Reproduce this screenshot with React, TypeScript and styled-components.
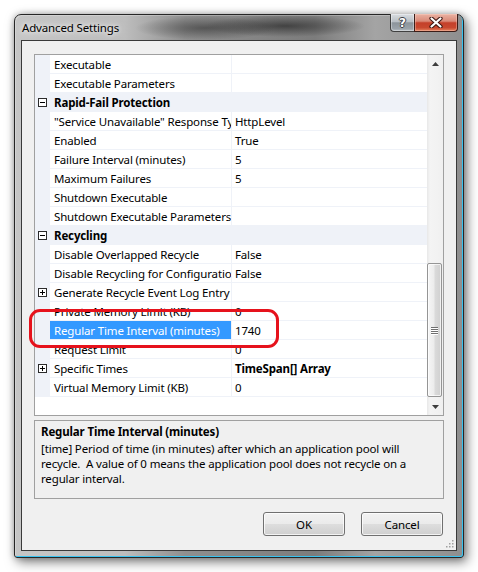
import React from "react";
import styled, { createGlobalStyle } from "styled-components";

const Global = createGlobalStyle`
  html, body { margin: 0; padding: 0; background: #ffffff; }
  body { font-family: "Noto Sans", "Open Sans", sans-serif; font-size: 11.5px; letter-spacing: -0.15px; color: #000; }
  * { box-sizing: border-box; }
`;

const LINE = "#eff2f8";

const Stage = styled.div`
  width: 478px;
  height: 572px;
  padding: 14px 0 0 14px;
  background: #ffffff;
  overflow: hidden;
`;

const Window = styled.div`
  width: 450px;
  height: 544px;
  border: 1px solid #262626;
  border-radius: 7px 7px 3px 3px;
  padding: 0 6px 6px 6px;
  display: flex;
  flex-direction: column;
  background:
    radial-gradient(ellipse 70px 12px at 190px 13px, rgba(40, 40, 40, 0.55), rgba(40, 40, 40, 0)),
    radial-gradient(ellipse 80px 11px at 270px 11px, rgba(25, 25, 25, 0.6), rgba(25, 25, 25, 0)),
    linear-gradient(90deg, #c6c6c6 0px, #bdbdbd 110px, #8f8f8f 170px, #7c7c7c 300px, #a4a4a4 360px, #8e8e8e 450px);
  box-shadow:
    inset -1px -1px 0 #37c3f0,
    inset 1px 1px 0 rgba(255, 255, 255, 0.25),
    3px 4px 12px rgba(0, 0, 0, 0.5),
    0 0 6px rgba(0, 0, 0, 0.25);
`;

const TitleBar = styled.div`
  height: 25px;
  flex: none;
  display: flex;
  justify-content: space-between;
  align-items: flex-start;
`;

const TitleText = styled.div`
  padding: 5px 0 0 1px;
  font-size: 11.5px;
  line-height: 16px;
  color: #000;
  text-shadow: 0 0 8px rgba(255, 255, 255, 0.95), 0 0 4px rgba(255, 255, 255, 0.8);
`;

const CaptionButtons = styled.div`
  display: flex;
  margin: -1px -1px 0 0;
`;

const HelpButton = styled.div`
  width: 24px;
  height: 18px;
  border: 1px solid #404040;
  border-right: none;
  border-top: none;
  border-radius: 0 0 0 4px;
  background: linear-gradient(180deg, #d9dde1 0%, #b9bfc5 45%, #8c949b 52%, #9aa2a9 85%, #b7bec4 100%);
  box-shadow: inset 0 0 0 1px rgba(255, 255, 255, 0.35);
  display: flex;
  align-items: center;
  justify-content: center;
  font-family: "DejaVu Sans", sans-serif;
  font-weight: bold;
  font-size: 12px;
  letter-spacing: 0;
  color: #fff;
  text-shadow: -1px 0 0 #3c4046, 1px 0 0 #3c4046, 0 -1px 0 #3c4046, 0 1px 0 #3c4046;
`;

const CloseButton = styled.div`
  width: 44px;
  height: 18px;
  border: 1px solid #3b1d18;
  border-top: none;
  border-radius: 0 0 4px 0;
  background: linear-gradient(180deg, #eab2a3 0%, #d98a78 42%, #c4402a 52%, #c8482f 80%, #e5835f 100%);
  box-shadow: inset 0 0 0 1px rgba(255, 220, 210, 0.35);
  display: flex;
  align-items: center;
  justify-content: center;
`;

const Client = styled.div`
  position: relative;
  flex: 1;
  border: 1px solid #3a3a3a;
  background: #f0f0f0;
  padding: 13px 12px 14px 12px;
  display: flex;
  flex-direction: column;
`;

const Grid = styled.div`
  position: relative;
  height: 362px;
  flex: none;
  border: 1px solid #a0a0a0;
  display: flex;
  background: #ffffff;
`;

const List = styled.div`
  flex: 1;
  display: flex;
  flex-direction: column;
  background: #ffffff;
  overflow: hidden;
`;

const Row = styled.div`
  display: grid;
  grid-template-columns: 14px 181px 196px;
  column-gap: 1px;
  height: 19px;
  flex: none;
  background: ${LINE};
`;

const Gutter = styled.div`
  height: 19px;
  display: flex;
  align-items: center;
  padding-left: 3px;
`;

const NameCell = styled.div<{ $selected?: boolean }>`
  height: 18px;
  line-height: 20px;
  padding-left: 4px;
  white-space: nowrap;
  overflow: hidden;
  background: ${(p) => (p.$selected ? "#3399ff" : "#ffffff")};
  color: ${(p) => (p.$selected ? "#ffffff" : "#000000")};
`;

const ValueCell = styled.div<{ $bold?: boolean }>`
  height: 18px;
  line-height: 20px;
  padding-left: 3px;
  white-space: nowrap;
  overflow: hidden;
  background: #ffffff;
  font-weight: ${(p) => (p.$bold ? "bold" : "normal")};
`;

const CategoryName = styled.div`
  grid-column: 2 / 4;
  height: 19px;
  line-height: 20px;
  padding-left: 4px;
  font-weight: bold;
  white-space: nowrap;
`;

const Filler = styled.div`
  flex: 1;
  background: #ffffff;
`;

const ScrollBar = styled.div`
  width: 16px;
  flex: none;
  display: flex;
  flex-direction: column;
  background: linear-gradient(90deg, #e8e8e8 0px, #f4f4f4 3px, #f0f0f0 100%);
`;

const ArrowButton = styled.div`
  height: 17px;
  flex: none;
  display: flex;
  align-items: center;
  justify-content: center;
`;

const Track = styled.div`
  flex: 1;
  display: flex;
  flex-direction: column;
`;

const Thumb = styled.div`
  width: 15px;
  border: 1px solid #959595;
  border-radius: 2px;
  background: linear-gradient(90deg, #f6f6f6 0%, #ececec 45%, #dadada 55%, #d0d0d0 100%);
  box-shadow: inset 0 0 0 1px rgba(255, 255, 255, 0.7);
  display: flex;
  align-items: center;
  justify-content: center;
`;

const Gripper = styled.div`
  width: 7px;
  display: flex;
  flex-direction: column;
  gap: 1px;
`;

const GripLine = styled.div`
  height: 1px;
  background: #6f6f6f;
  box-shadow: 0 1px 0 #ffffff;
`;

const Highlight = styled.div`
  position: absolute;
  left: -6px;
  top: 254px;
  width: 250px;
  height: 39px;
  border: 3px solid #e6121c;
  border-radius: 11px;
  pointer-events: none;
`;

const Description = styled.div`
  margin-top: 4px;
  height: 79px;
  flex: none;
  border: 1px solid #a0a0a0;
  background: #f0f0f0;
  padding: 3px 6px;
`;

const DescTitle = styled.div`
  font-weight: bold;
  line-height: 15px;
`;

const DescBody = styled.div`
  margin-top: 2px;
  line-height: 15px;
  white-space: nowrap;
`;

const ButtonRow = styled.div`
  margin-top: 13px;
  display: flex;
  justify-content: flex-end;
  gap: 16px;
  padding-right: 1px;
`;

const DialogButton = styled.div`
  width: 82px;
  height: 24px;
  border: 1px solid #707070;
  border-radius: 3px;
  background: linear-gradient(180deg, #f2f2f2 0%, #ebebeb 48%, #dddddd 52%, #cfcfcf 100%);
  box-shadow: inset 0 0 0 1px rgba(255, 255, 255, 0.75);
  display: flex;
  align-items: center;
  justify-content: center;
  font-size: 11.5px;
  color: #000;
`;

const SizeGrip = styled.svg`
  position: absolute;
  right: 2px;
  bottom: 2px;
`;

type Item =
  | { kind: "cat"; name: string }
  | { kind: "prop"; name: string; value?: string; bold?: boolean; plus?: boolean; selected?: boolean };

const items: Item[] = [
  { kind: "prop", name: "Executable" },
  { kind: "prop", name: "Executable Parameters" },
  { kind: "cat", name: "Rapid-Fail Protection" },
  { kind: "prop", name: "\"Service Unavailable\" Response Type", value: "HttpLevel" },
  { kind: "prop", name: "Enabled", value: "True" },
  { kind: "prop", name: "Failure Interval (minutes)", value: "5" },
  { kind: "prop", name: "Maximum Failures", value: "5" },
  { kind: "prop", name: "Shutdown Executable" },
  { kind: "prop", name: "Shutdown Executable Parameters" },
  { kind: "cat", name: "Recycling" },
  { kind: "prop", name: "Disable Overlapped Recycle", value: "False" },
  { kind: "prop", name: "Disable Recycling for Configuration Changes", value: "False" },
  { kind: "prop", name: "Generate Recycle Event Log Entry", plus: true },
  { kind: "prop", name: "Private Memory Limit (KB)", value: "0" },
  { kind: "prop", name: "Regular Time Interval (minutes)", value: "1740", selected: true },
  { kind: "prop", name: "Request Limit", value: "0" },
  { kind: "prop", name: "Specific Times", value: "TimeSpan[] Array", bold: true, plus: true },
  { kind: "prop", name: "Virtual Memory Limit (KB)", value: "0" },
];

const ExpandBox = ({ plus }: { plus: boolean }) => (
  <svg width="9" height="9" viewBox="0 0 9 9">
    <rect x="0.5" y="0.5" width="8" height="8" fill="#ffffff" stroke="#2b2b2b" />
    <line x1="2" y1="4.5" x2="7" y2="4.5" stroke="#000" />
    {plus && <line x1="4.5" y1="2" x2="4.5" y2="7" stroke="#000" />}
  </svg>
);

const thumbOffset = 191;
const thumbHeight = 134;

export default function App() {
  return (
    <Stage>
      <Global />
      <Window>
        <TitleBar>
          <TitleText>Advanced Settings</TitleText>
          <CaptionButtons>
            <HelpButton>?</HelpButton>
            <CloseButton>
              <svg width="14" height="11" viewBox="0 0 14 11">
                <path d="M2.5 1.5 L11.5 9.5 M11.5 1.5 L2.5 9.5" stroke="#3a1510" strokeWidth="4.2" strokeLinecap="round" />
                <path d="M2.5 1.5 L11.5 9.5 M11.5 1.5 L2.5 9.5" stroke="#ffffff" strokeWidth="2.2" strokeLinecap="round" />
              </svg>
            </CloseButton>
          </CaptionButtons>
        </TitleBar>
        <Client>
          <Grid>
            <List>
              {items.map((it, i) =>
                it.kind === "cat" ? (
                  <Row key={i}>
                    <Gutter>
                      <ExpandBox plus={false} />
                    </Gutter>
                    <CategoryName>{it.name}</CategoryName>
                  </Row>
                ) : (
                  <Row key={i}>
                    <Gutter>{it.plus && <ExpandBox plus />}</Gutter>
                    <NameCell $selected={it.selected}>{it.name}</NameCell>
                    <ValueCell $bold={it.bold}>{it.value ?? ""}</ValueCell>
                  </Row>
                )
              )}
              <Filler />
            </List>
            <ScrollBar>
              <ArrowButton>
                <svg width="7" height="4" viewBox="0 0 7 4">
                  <polygon points="3.5,0 7,4 0,4" fill="#3d3d3d" />
                </svg>
              </ArrowButton>
              <Track>
                <Thumb style={{ marginTop: thumbOffset, height: thumbHeight }}>
                  <Gripper>
                    <GripLine />
                    <GripLine />
                    <GripLine />
                    <GripLine />
                  </Gripper>
                </Thumb>
              </Track>
              <ArrowButton>
                <svg width="7" height="4" viewBox="0 0 7 4">
                  <polygon points="0,0 7,0 3.5,4" fill="#3d3d3d" />
                </svg>
              </ArrowButton>
            </ScrollBar>
            <Highlight />
          </Grid>
          <Description>
            <DescTitle>Regular Time Interval (minutes)</DescTitle>
            <DescBody>
              [time] Period of time (in minutes) after which an application pool will
              <br />
              recycle.&nbsp; A value of 0 means the application pool does not recycle on a
              <br />
              regular interval.
            </DescBody>
          </Description>
          <ButtonRow>
            <DialogButton>OK</DialogButton>
            <DialogButton>Cancel</DialogButton>
          </ButtonRow>
          <SizeGrip width="10" height="10" viewBox="0 0 10 10">
            {[
              [8, 2],
              [8, 5],
              [5, 5],
              [8, 8],
              [5, 8],
              [2, 8],
            ].map(([x, y], k) => (
              <rect key={k} x={x} y={y} width="1.5" height="1.5" fill="#a0a0a0" />
            ))}
          </SizeGrip>
        </Client>
      </Window>
    </Stage>
  );
}
